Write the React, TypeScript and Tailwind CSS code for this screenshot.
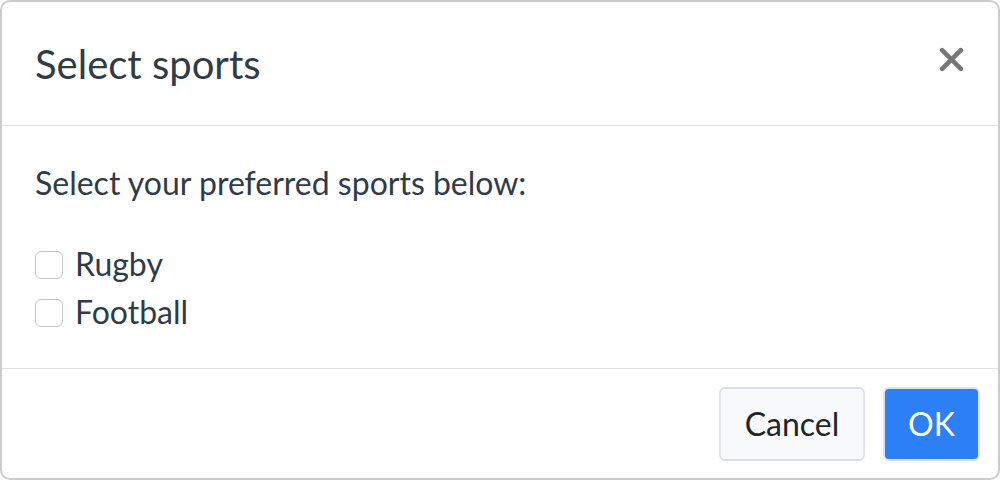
export default function App() {
  return (
    <div
      className="w-[1000px] h-[480px] bg-white"
      style={{ fontFamily: "Lato, 'Open Sans', sans-serif" }}
    >
      <div className="h-full flex flex-col border-2 border-[#cccccc] rounded-[10px] bg-white">
        <div className="h-[124px] flex items-start justify-between pl-[33px] pr-[34px] pt-[42px] border-b border-[#dee2e6]">
          <h1 className="text-[40px] leading-[40px] text-[#313b46]">Select sports</h1>
          <button className="mt-[3px] w-[25px] h-[25px] flex items-center justify-center text-[#777777]">
            <svg viewBox="0 0 24 24" width="25" height="25" stroke="currentColor" strokeWidth="4.4" strokeLinecap="round">
              <line x1="3" y1="3" x2="21" y2="21" />
              <line x1="21" y1="3" x2="3" y2="21" />
            </svg>
          </button>
        </div>
        <div className="flex-1 pl-[33px] pt-[37px] text-[#313b46]">
          <p className="text-[32px] leading-[40px]">Select your preferred sports below:</p>
          <div className="mt-[37px] flex flex-col">
            <label className="flex items-start gap-[12px] text-[32px] leading-[48px]">
              <span className="mt-[11px] w-[28px] h-[28px] rounded-[6px] border border-[#c4c4c4] bg-white" />
              Rugby
            </label>
            <label className="flex items-start gap-[12px] text-[32px] leading-[48px]">
              <span className="mt-[11px] w-[28px] h-[28px] rounded-[6px] border border-[#c4c4c4] bg-white" />
              Football
            </label>
          </div>
        </div>
        <div className="h-[110px] flex items-center justify-end gap-[18px] pr-[18px] border-t border-[#dee2e6]">
          <button className="w-[146px] h-[74px] rounded-[6px] border-2 border-[#dee2e6] bg-[#f8f9fa] text-[32px] text-[#212529]">
            Cancel
          </button>
          <button className="w-[97px] h-[74px] rounded-[6px] border-2 border-[#dde3ea] bg-[#2d7ff6] text-[32px] text-white">
            OK
          </button>
        </div>
      </div>
    </div>
  );
}
